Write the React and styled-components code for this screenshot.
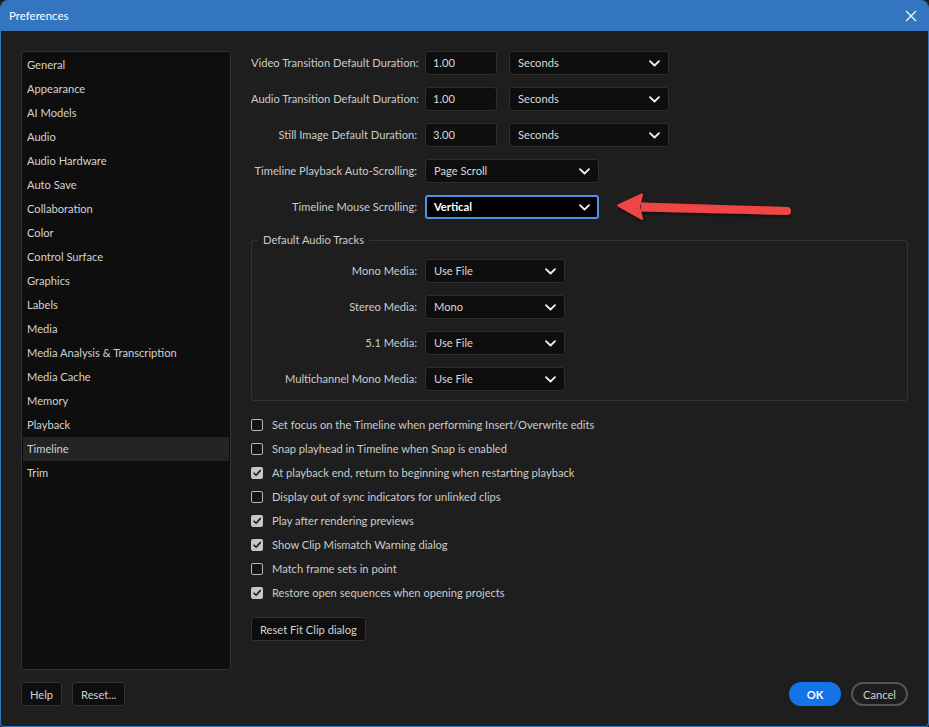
import React from "react";
import styled, { createGlobalStyle } from "styled-components";

const GlobalStyle = createGlobalStyle`
  html, body { margin: 0; padding: 0; background: #1e1e1e; }
  body { font-family: Lato, "Noto Sans", sans-serif; }
  * { box-sizing: border-box; }
`;

const sections = [
  "General", "Appearance", "AI Models", "Audio", "Audio Hardware", "Auto Save",
  "Collaboration", "Color", "Control Surface", "Graphics", "Labels", "Media",
  "Media Analysis & Transcription", "Media Cache", "Memory", "Playback", "Timeline", "Trim",
];

const checks = [
  ["Set focus on the Timeline when performing Insert/Overwrite edits", false],
  ["Snap playhead in Timeline when Snap is enabled", false],
  ["At playback end, return to beginning when restarting playback", true],
  ["Display out of sync indicators for unlinked clips", false],
  ["Play after rendering previews", true],
  ["Show Clip Mismatch Warning dialog", true],
  ["Match frame sets in point", false],
  ["Restore open sequences when opening projects", true],
];

const durations = [
  ["Video Transition Default Duration:", "1.00"],
  ["Audio Transition Default Duration:", "1.00"],
  ["Still Image Default Duration:", "3.00"],
];

const audioTracks = [
  ["Mono Media:", "Use File"],
  ["Stereo Media:", "Mono"],
  ["5.1 Media:", "Use File"],
  ["Multichannel Mono Media:", "Use File"],
];

const Chevron = () => (
  <svg width="11" height="7" viewBox="0 0 11 7">
    <path d="M1 1.2 L5.5 5.5 L10 1.2" fill="none" stroke="#f2f2f2" strokeWidth="1.8" strokeLinecap="round" strokeLinejoin="round" />
  </svg>
);

const Check = () => (
  <svg width="10" height="10" viewBox="0 0 10 10">
    <path d="M2 5.2 L4.1 7.3 L8.2 2.6" fill="none" stroke="#1a1a1a" strokeWidth="1.6" strokeLinecap="round" strokeLinejoin="round" />
  </svg>
);

const Select = ({ value, width, focused }) => (
  <SelectBox $width={width} $focused={focused}>
    <span>{value}</span>
    <Chevron />
  </SelectBox>
);

export default function App() {
  return (
    <Window>
      <GlobalStyle />
      <TitleBar>
        <Title>Preferences</Title>
        <svg width="12" height="12" viewBox="0 0 12 12">
          <path d="M1 1 L11 11 M11 1 L1 11" stroke="#fff" strokeWidth="1.1" />
        </svg>
      </TitleBar>
      <Body>
        <Content>
          <Sidebar>
            {sections.map((s) => (
              <NavItem key={s} $active={s === "Timeline"}>{s}</NavItem>
            ))}
          </Sidebar>
          <Main>
            {durations.map(([label, v]) => (
              <FormRow key={label}>
                <Label>{label}</Label>
                <TextInput>{v}</TextInput>
                <Select value="Seconds" width={160} />
              </FormRow>
            ))}
            <FormRow>
              <Label>Timeline Playback Auto-Scrolling:</Label>
              <Select value="Page Scroll" width={174} />
            </FormRow>
            <FormRow>
              <Label>Timeline Mouse Scrolling:</Label>
              <Select value="Vertical" width={174} focused />
              <Arrow>
                <svg width="190" height="34" viewBox="0 0 190 34">
                  <defs>
                    <filter id="sh" x="-10%" y="-40%" width="120%" height="180%">
                      <feDropShadow dx="0" dy="1.5" stdDeviation="1.5" floodColor="#000" floodOpacity="0.6" />
                    </filter>
                  </defs>
                  <g filter="url(#sh)">
                    <path d="M26 13.5 L172 18 A4 4 0 0 1 172 26 L26 22.5 Z" fill="#f04545" />
                    <path d="M3 16.5 L27 5.5 L24 17.5 L27 30 Z" fill="#f04545" strokeLinejoin="round" stroke="#f04545" strokeWidth="2" />
                  </g>
                </svg>
              </Arrow>
            </FormRow>
            <GroupBox>
              <Legend>Default Audio Tracks</Legend>
              {audioTracks.map(([label, v]) => (
                <FormRow key={label}>
                  <Label $inset>{label}</Label>
                  <Select value={v} width={140} />
                </FormRow>
              ))}
            </GroupBox>
            <CheckList>
              {checks.map(([text, on]) => (
                <CheckRow key={text}>
                  <Box $checked={on}>{on && <Check />}</Box>
                  <CheckText>{text}</CheckText>
                </CheckRow>
              ))}
            </CheckList>
            <div>
              <Button>Reset Fit Clip dialog</Button>
            </div>
          </Main>
        </Content>
        <Footer>
          <FooterGroup>
            <Button>Help</Button>
            <Button>Reset...</Button>
          </FooterGroup>
          <FooterGroup>
            <PillButton $primary>OK</PillButton>
            <PillButton>Cancel</PillButton>
          </FooterGroup>
        </Footer>
      </Body>
    </Window>
  );
}

const Window = styled.div`
  width: 929px;
  height: 727px;
  display: flex;
  flex-direction: column;
  background: #1e1e1e;
  border: 1px solid #3475bf;
  border-top: none;
  border-radius: 8px 8px 4px 4px;
  overflow: hidden;
  color: #cfcfcf;
  font-size: 11.15px;
`;

const TitleBar = styled.div`
  height: 31px;
  flex: none;
  background: #3475bf;
  display: flex;
  align-items: center;
  justify-content: space-between;
  padding: 0 11px 0 8px;
`;

const Title = styled.div`
  color: #fff;
  font-size: 11.5px;
`;

const Body = styled.div`
  flex: 1;
  display: flex;
  flex-direction: column;
  padding: 20px 20px 20px 20px;
`;

const Content = styled.div`
  display: flex;
  gap: 20px;
  height: 619px;
`;

const Sidebar = styled.div`
  width: 210px;
  flex: none;
  background: #0e0e0e;
  border: 1px solid #333;
  border-radius: 3px;
  padding: 1px;
`;

const NavItem = styled.div`
  height: 24px;
  line-height: 23px;
  padding-left: 4px;
  color: #d2d2d2;
  background: ${(p) => (p.$active ? "#242424" : "transparent")};
`;

const Main = styled.div`
  flex: 1;
  display: flex;
  flex-direction: column;
  gap: 12px;
`;

const FormRow = styled.div`
  display: flex;
  align-items: center;
  gap: 8px;
  height: 24px;
  position: relative;
`;

const Label = styled.div`
  width: ${(p) => (p.$inset ? 165 : 166)}px;
  flex: none;
  text-align: right;
  white-space: nowrap;
  color: #cbcbcb;
  line-height: 21px;
  padding-bottom: 1px;
`;

const TextInput = styled.div`
  width: 72px;
  height: 24px;
  margin-right: 4px;
  line-height: 22px;
  padding-left: 7px;
  background: #0e0e0e;
  border: 1px solid #2e2e2e;
  border-radius: 3px;
  color: #d8d8d8;
`;

const SelectBox = styled.div`
  width: ${(p) => p.$width}px;
  height: 24px;
  display: flex;
  align-items: center;
  justify-content: space-between;
  padding: 0 ${(p) => (p.$focused ? 7 : 8)}px 0 ${(p) => (p.$focused ? 7 : 8)}px;
  background: ${(p) => (p.$focused ? "#000" : "#0e0e0e")};
  border: ${(p) => (p.$focused ? "2px solid #4a94e8" : "1px solid #2e2e2e")};
  border-radius: 3px;
  color: ${(p) => (p.$focused ? "#fff" : "#d8d8d8")};
  font-weight: ${(p) => (p.$focused ? 700 : 400)};
  line-height: 22px;
`;

const Arrow = styled.div`
  position: absolute;
  left: 364px;
  top: -6px;
  line-height: 0;
`;

const GroupBox = styled.div`
  position: relative;
  margin-top: 9px;
  border: 1px solid #333;
  border-radius: 3px;
  padding: 18px 0 9px;
  display: flex;
  flex-direction: column;
  gap: 12px;
`;

const Legend = styled.div`
  position: absolute;
  top: -8px;
  left: 6px;
  padding: 0 5px;
  background: #1e1e1e;
  line-height: 14px;
  color: #cbcbcb;
`;

const CheckList = styled.div`
  display: flex;
  flex-direction: column;
`;

const CheckRow = styled.div`
  height: 24px;
  display: flex;
  align-items: center;
  gap: 9px;
  color: #cbcbcb;
`;

const CheckText = styled.span`
  line-height: 21px;
  padding-bottom: 1px;
`;

const Box = styled.div`
  width: 12px;
  height: 12px;
  border-radius: 2px;
  display: flex;
  align-items: center;
  justify-content: center;
  background: ${(p) => (p.$checked ? "#c6c6c6" : "#151515")};
  border: ${(p) => (p.$checked ? "none" : "1.5px solid #b8b8b8")};
`;

const Button = styled.button`
  height: 24px;
  padding: 0 8px;
  background: #0e0e0e;
  border: 1px solid #333;
  border-radius: 3px;
  color: #d2d2d2;
  font-family: inherit;
  font-size: 11.15px;
`;

const Footer = styled.div`
  margin-top: 12px;
  display: flex;
  justify-content: space-between;
  align-items: center;
`;

const FooterGroup = styled.div`
  display: flex;
  gap: 10px;
`;

const PillButton = styled.button`
  height: 24px;
  min-width: 52px;
  padding: 0 10px;
  border-radius: 12px;
  font-family: inherit;
  font-size: 11.15px;
  font-weight: ${(p) => (p.$primary ? 700 : 400)};
  color: ${(p) => (p.$primary ? "#fff" : "#cfcfcf")};
  background: ${(p) => (p.$primary ? "#1473e6" : "transparent")};
  border: ${(p) => (p.$primary ? "none" : "2px solid #555")};
`;
